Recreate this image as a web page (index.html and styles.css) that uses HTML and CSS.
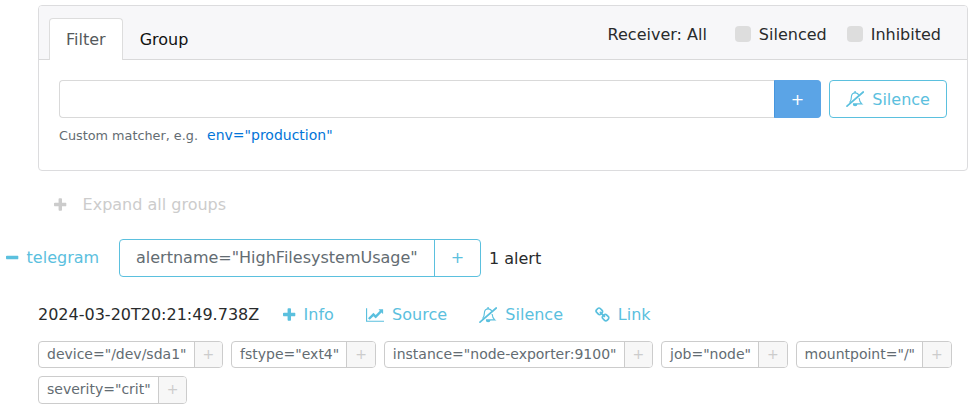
FILE: index.html
```html
<!DOCTYPE html>
<html lang="en">
<head>
<meta charset="utf-8">
<title>Alerts</title>
<link rel="stylesheet" href="styles.css">
</head>
<body>
<svg class="defs" width="0" height="0">
  <symbol id="plus" viewBox="192 0 1408 1792"><path d="M1600 736v192q0 40-28 68t-68 28h-416v416q0 40-28 68t-68 28h-192q-40 0-68-28t-28-68v-416h-416q-40 0-68-28t-28-68v-192q0-40 28-68t68-28h416v-416q0-40 28-68t68-28h192q40 0 68 28t28 68v416h416q40 0 68 28t28 68z"/></symbol>
  <symbol id="minus" viewBox="192 0 1408 1792"><path d="M1600 736v192q0 40-28 68t-68 28h-1216q-40 0-68-28t-28-68v-192q0-40 28-68t68-28h1216q40 0 68 28t28 68z"/></symbol>
  <symbol id="chart" viewBox="0 0 2048 1792"><path d="M2048 1536v128h-2048v-1536h128v1408h1920zm-128-1248v435q0 21-19.5 29.5t-35.5-7.5l-121-121-633 633q-10 10-23 10t-23-10l-233-233-416 416-192-192 585-585q10-10 23-10t23 10l233 233 464-464-121-121q-16-16-7.5-35.5t29.5-19.5h435q14 0 23 9t9 23z"/></symbol>
  <symbol id="bell-off" viewBox="0 0 18.3 16">
    <path d="M3.6 11.6C5 10 5.4 8.2 5.4 6C5.4 3.5 7 1.8 9.1 1.8C10.8 1.8 12.2 2.7 12.7 4.1M13.1 7C13.4 9.8 14.2 11.7 15.8 12.9H7" fill="none" stroke="currentColor" stroke-width="1.15"/>
    <path d="M8.2 1.8V1a.9.9 0 0 1 1.8 0v.8zM6.8 13h4.7a2.35 2.35 0 0 1-4.7 0z"/>
    <path d="M1 15.2L17.3 1" fill="none" stroke="currentColor" stroke-width="1.7" stroke-linecap="round"/>
  </symbol>
  <symbol id="chain" viewBox="64 0 1664 1792"><path d="M1520 1216q0-40-28-68l-208-208q-28-28-68-28-42 0-72 32 3 3 19 18.5t21.5 21.5 15 19 13 25.5 3.5 27.5q0 40-28 68t-68 28q-15 0-27.5-3.5t-25.5-13-19-15-21.5-21.5-18.5-19q-33 31-33 73 0 40 28 68l206 207q27 27 68 27 40 0 68-26l147-146q28-28 28-67zm-703-705q0-40-28-68l-206-207q-28-28-68-28-39 0-68 27l-147 146q-28 28-28 67 0 40 28 68l208 208q27 27 68 27 42 0 72-31-3-3-19-18.5t-21.5-21.5-15-19-13-25.5-3.5-27.5q0-40 28-68t68-28q15 0 27.5 3.5t25.5 13 19 15 21.5 21.5 18.5 19q33-31 33-73zm895 705q0 120-85 203l-147 146q-83 83-203 83-121 0-204-85l-206-207q-83-83-83-203 0-123 88-209l-88-88q-86 88-208 88-120 0-204-84l-208-208q-84-84-84-204t85-203l147-146q83-83 203-83 121 0 204 85l206 207q83 83 83 203 0 123-88 209l88 88q86-88 208-88 120 0 204 84l208 208q84 84 84 204z"/></symbol>
</svg>

<section class="card">
  <header class="card-header">
    <nav class="tabs">
      <a class="tab active">Filter</a>
      <a class="tab">Group</a>
    </nav>
    <div class="options">
      <span class="receiver">Receiver: All</span>
      <label class="check"><i class="box"></i><span class="check-text">Silenced</span></label>
      <label class="check"><i class="box"></i><span class="check-text">Inhibited</span></label>
    </div>
  </header>
  <div class="card-body">
    <div class="filter-row">
      <input class="matcher" type="text">
      <button class="add">+</button>
      <button class="silence-btn"><svg class="icon wide"><use href="#bell-off"/></svg>Silence</button>
    </div>
    <div class="hint">Custom matcher, e.g. <a class="example">env="production"</a></div>
  </div>
</section>

<div class="expand"><svg class="icon"><use href="#plus"/></svg>Expand all groups</div>

<div class="group">
  <a class="toggle"><svg class="icon"><use href="#minus"/></svg>telegram</a>
  <div class="label-group"><span class="label-name">alertname="HighFilesystemUsage"</span><span class="label-add">+</span></div>
  <span class="count">1 alert</span>
</div>

<div class="alert">
  <div class="alert-head">
    <time class="time">2024-03-20T20:21:49.738Z</time>
    <a class="action"><svg class="icon"><use href="#plus"/></svg>Info</a>
    <a class="action"><svg class="icon wide"><use href="#chart"/></svg>Source</a>
    <a class="action"><svg class="icon wide"><use href="#bell-off"/></svg>Silence</a>
    <a class="action"><svg class="icon link"><use href="#chain"/></svg>Link</a>
  </div>
  <div class="tags">
    <div class="tag"><span class="tag-name">device="/dev/sda1"</span><span class="tag-add">+</span></div>
    <div class="tag"><span class="tag-name">fstype="ext4"</span><span class="tag-add">+</span></div>
    <div class="tag"><span class="tag-name">instance="node-exporter:9100"</span><span class="tag-add">+</span></div>
    <div class="tag"><span class="tag-name">job="node"</span><span class="tag-add">+</span></div>
    <div class="tag"><span class="tag-name">mountpoint="/"</span><span class="tag-add">+</span></div>
    <div class="tag"><span class="tag-name">severity="crit"</span><span class="tag-add">+</span></div>
  </div>
</div>
</body>
</html>
```
FILE: styles.css
```css
* { box-sizing: border-box; }
body {
  margin: 0;
  padding-top: 5px;
  overflow: hidden;
  background: #fff;
  color: #292b2c;
  font: 16px/24px "DejaVu Sans", sans-serif;
}
.defs { position: absolute; }
.icon { flex: none; display: block; width: 12.57px; height: 16px; fill: currentColor; }
.icon.wide { width: 18.28px; }
.icon.link { width: 14.86px; }

.card {
  width: 930px;
  height: 166px;
  margin-left: 38px;
  border: 1px solid #dcdcde;
  border-radius: 4px;
}
.card-header {
  display: flex;
  justify-content: space-between;
  height: 54px;
  padding: 12px 26px 0 10px;
  background: #f7f7f9;
  border-bottom: 1px solid #d9d9da;
  border-radius: 3px 3px 0 0;
}
.tabs { display: flex; }
.tab {
  height: 42px;
  padding: 9px 16px 0;
  border: 1px solid transparent;
  border-bottom: 0;
  border-radius: 4px 4px 0 0;
  color: #111;
}
.tab.active { background: #fff; border-color: #ddd; color: #55595c; }
.options { display: flex; height: 32px; align-items: center; }
.receiver { margin-right: 28px; padding-top: 2px; }
.check { display: flex; align-items: center; height: 32px; }
.check + .check { margin-left: 20px; }
.check-text { padding-top: 2px; }
.box { width: 16px; height: 16px; margin-right: 8px; border-radius: 4px; background: #ddd; }

.card-body { padding: 20px; }
.filter-row { display: flex; height: 38px; }
.matcher {
  width: 716px;
  border: 1px solid #d9d9d9;
  border-right: 0;
  border-radius: 4px 0 0 4px;
  background: #fff;
}
button { margin: 0; padding: 0; font: inherit; }
.add {
  width: 47px;
  margin-left: -1px;
  padding-top: 2px;
  border: 1px solid #5ba4e6;
  border-left-color: #4696de;
  border-radius: 0 4px 4px 0;
  background: #5ba4e6;
  color: #fff;
}
.silence-btn {
  display: flex;
  align-items: center;
  gap: 8px;
  width: 118px;
  margin-left: 8px;
  padding: 2px 0 0 16px;
  border: 1px solid #5bc0de;
  border-radius: 4px;
  background: #fff;
  color: #5bc0de;
}
.silence-btn .icon { margin-top: -2px; }
.hint { margin-top: 5px; color: #636c72; font-size: 12.8px; }
.example { margin-left: 5px; color: #0275d8; font-size: 14px; }

.expand {
  display: flex;
  align-items: center;
  gap: 16px;
  margin: 22px 0 0 54px;
  color: #ccc;
}
.expand .icon { margin-top: -1px; }
.group { display: flex; align-items: center; margin-top: 22px; padding-left: 6px; }
.toggle { display: flex; align-items: center; gap: 8px; width: 113px; color: #5bc0de; }
.toggle .icon { margin-top: -1px; }
.label-group {
  display: flex;
  width: 362px;
  height: 38px;
  border: 1px solid #5bc0de;
  border-radius: 4px;
  line-height: 36px;
}
.label-name { width: 315px; padding-left: 16px; border-right: 1px solid #5bc0de; color: #636c72; }
.label-add { flex: 1; text-align: center; color: #5bc0de; }
.count { margin-left: 8px; padding-top: 1px; }

.alert { margin: 26px 0 0 38px; }
.alert-head { display: flex; align-items: center; height: 24px; }
.time { width: 245px; }
.action { display: flex; align-items: center; gap: 8px; margin-right: 32px; color: #5bc0de; }
.action .icon { margin-top: -1px; }
.tags { display: flex; flex-wrap: wrap; gap: 8px; margin-top: 14px; }
.tag {
  display: flex;
  height: 27.4px;
  border: 1px solid #ccc;
  border-radius: 4px;
  color: #636c72;
  font-size: 14px;
  line-height: 25px;
}
.tag-name { padding: 0 7.2px 0 8px; }
.tag-add { width: 28.4px; border-left: 1px solid #ccc; border-radius: 0 3px 3px 0; background: #f7f7f7; color: #ccc; text-align: center; }
```
